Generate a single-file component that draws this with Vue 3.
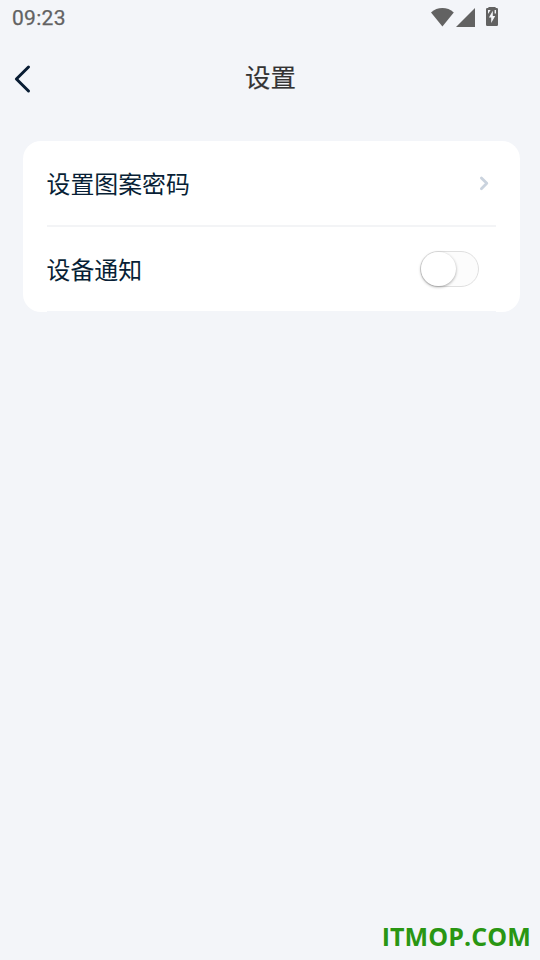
<script setup>
import { ref } from 'vue'

const notify = ref(false)
</script>

<template>
  <main class="screen">
    <header class="status">
      <span class="time">09:23</span>
      <div class="indicators">
        <svg class="wifi" width="24" height="20" viewBox="0 0 24 20">
          <path d="M1 5.4C7.4 -0.4 17.4 -0.4 23.8 5.4L12.4 19.6Z" />
        </svg>
        <svg class="signal" width="20" height="20" viewBox="0 0 20 20">
          <path d="M0 20H19V1Z" />
        </svg>
        <svg class="battery" width="12" height="20" viewBox="0 0 12 20">
          <path d="M2.4 0H9.6V1H10.8Q12 1 12 2.2V17.8Q12 19 10.8 19H1.2Q0 19 0 17.8V2.2Q0 1 1.2 1H2.4Z" />
          <path class="bolt" d="M6.8 3.8L2.9 10.4H5.2V16L9.2 9H6.8ZM2 3H4.6L2 7ZM8.6 3H10V6.6H8.6Z" />
        </svg>
      </div>
    </header>

    <nav class="navbar">
      <button class="back" aria-label="返回">
        <svg width="20" height="30" viewBox="0 0 20 30">
          <path d="M16.5 3L4.4 15L16.5 27" />
        </svg>
      </button>
      <h1 class="title">设置</h1>
    </nav>

    <section class="card">
      <div class="row">
        <span class="label">设置图案密码</span>
        <svg class="chevron" width="12" height="16" viewBox="0 0 12 16">
          <path d="M3.4 2.9L8.8 8.3L3.4 13.7" />
        </svg>
      </div>
      <div class="row">
        <span class="label">设备通知</span>
        <button
          class="switch"
          :class="{ on: notify }"
          role="switch"
          :aria-checked="notify"
          @click="notify = !notify"
        >
          <i class="knob"></i>
        </button>
      </div>
    </section>

    <footer class="mark">ITMOP.COM</footer>
  </main>
</template>

<style>
body {
  background: #f3f5f9;
}
</style>

<style scoped>
.screen {
  box-sizing: border-box;
  display: flex;
  flex-direction: column;
  height: 960px;
  background: #f3f5f9;
  font-family: "Noto Sans CJK SC", sans-serif;
}
.status {
  display: flex;
  justify-content: space-between;
  height: 36px;
  color: #626262;
}
.time {
  padding-left: 12px;
  font: 400 21px/36px Roboto, sans-serif;
  letter-spacing: 0.3px;
  -webkit-text-stroke: 0.25px #626262;
}
.indicators {
  display: flex;
  align-items: flex-start;
  padding: 7px 42px 0 0;
  fill: #626262;
}
.signal {
  margin-left: 2px;
}
.battery {
  margin-left: 10px;
}
.bolt {
  fill: #f3f5f9;
}
.navbar {
  display: grid;
  grid-template-columns: 48px 1fr 48px;
  align-items: center;
  height: 84px;
}
.back {
  display: flex;
  padding: 2px 0 0 12px;
  border: 0;
  background: none;
}
.back path {
  fill: none;
  stroke: #081c33;
  stroke-width: 3;
  stroke-linecap: round;
  stroke-linejoin: round;
}
.title {
  margin: 0;
  padding: 0 0 4px 1px;
  color: #333;
  font-size: 25.5px;
  font-weight: 400;
  line-height: 36px;
  text-align: center;
  -webkit-text-stroke: 0.15px #333;
}
.card {
  margin: 21px 20px 0 23px;
  padding: 0 24px;
  overflow: hidden;
  border-radius: 18px;
  background: #fff;
}
.row {
  display: flex;
  align-items: center;
  justify-content: space-between;
  height: 84px;
  padding-right: 17px;
  border-bottom: 2px solid #f3f4f6;
  color: #081f36;
  font-size: 23.9px;
}
.row:last-child {
  border-bottom: 1px solid #f3f5f9;
}
.label {
  margin-left: -0.5px;
  padding-bottom: 2px;
}
.chevron {
  margin-right: -11px;
}
.chevron path {
  fill: none;
  stroke: #cad3de;
  stroke-width: 2.8;
  stroke-linecap: round;
  stroke-linejoin: round;
}
.switch {
  box-sizing: border-box;
  display: flex;
  align-items: center;
  width: 59px;
  height: 36px;
  padding: 0;
  border: 1px solid #dfdfdf;
  border-radius: 18px;
  background: #fcfcfc;
}
.switch.on {
  justify-content: flex-end;
  background: #4cd964;
}
.knob {
  width: 35px;
  height: 34px;
  border-radius: 17.5px;
  background: #fff;
  box-shadow: 0 1px 3px rgba(0, 0, 0, 0.35);
}
.mark {
  margin-top: auto;
  padding: 0 9px 6px 0;
  color: #299613;
  font: 700 25px/36px "Open Sans", sans-serif;
  letter-spacing: 0.1px;
  text-align: right;
}
</style>
